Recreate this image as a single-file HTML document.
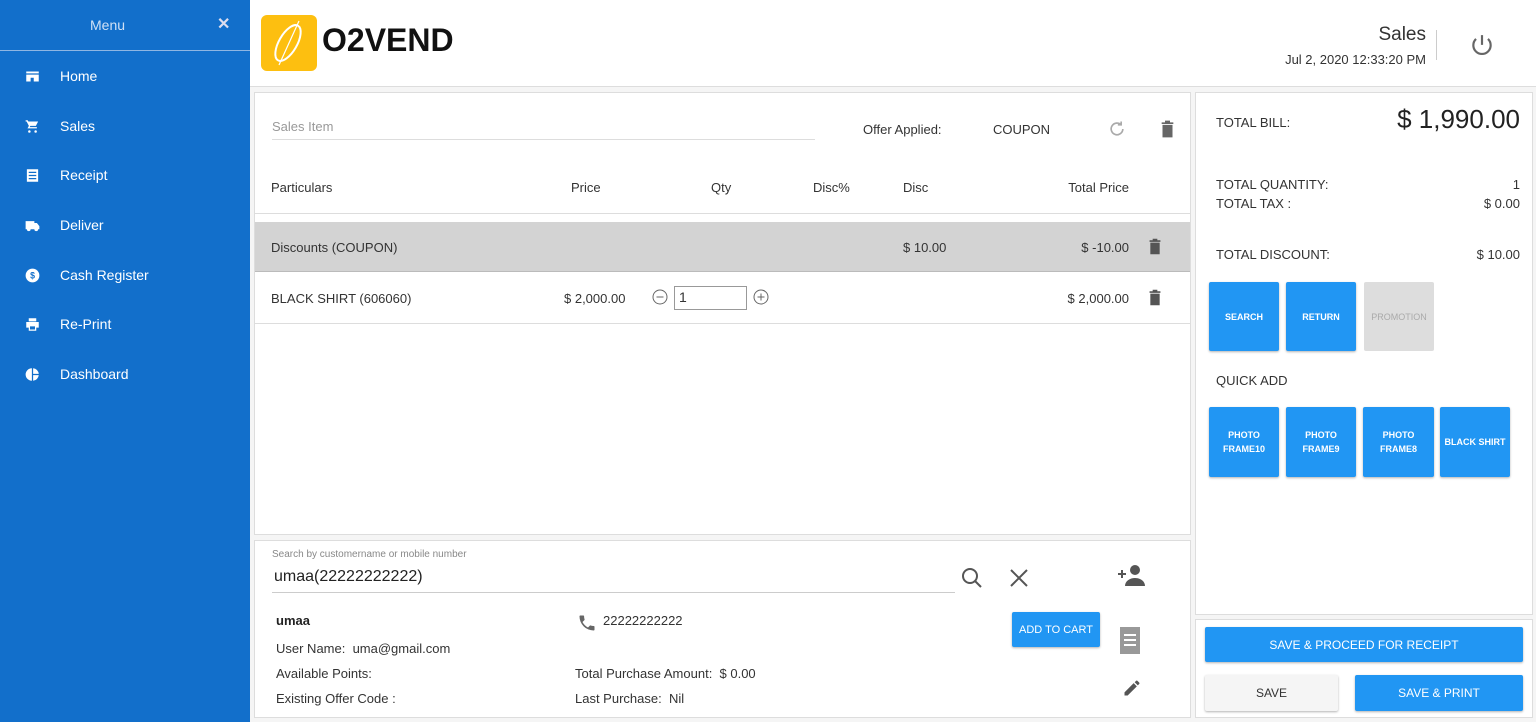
<!DOCTYPE html>
<html><head><meta charset="utf-8"><style>
*{box-sizing:border-box;margin:0;padding:0}
body{width:1536px;height:722px;overflow:hidden;font-family:"Liberation Sans",sans-serif;background:#f5f5f5;position:relative;color:#333}
.a{position:absolute}
#sb{left:0;top:0;width:250px;height:722px;background:#126fcb;color:#fff}
#sb .menu{left:0;top:0;width:250px;height:51px;border-bottom:1px solid #8fb6e3}
#sb .it{left:25px;font-size:14px;display:flex;align-items:center}
#sb .it svg{width:15px;height:15px;margin-right:20px}
#hd{left:250px;top:0;width:1286px;height:87px;background:#fff;border-bottom:1px solid #ddd}
.box{background:#fff;border:1px solid #ddd}
.t{font-size:13px;color:#333;white-space:nowrap}
.btn{background:#2196f3;color:#fff;font-size:9px;font-weight:bold;display:flex;align-items:center;justify-content:center;text-align:center;border-radius:2px;box-shadow:0 1px 2px rgba(0,0,0,.3);line-height:14px}
</style></head><body>
<div id="sb" class="a">
 <div class="a menu"><div class="a" style="left:90px;top:17px;font-size:14px;color:#cfe0f5">Menu</div><div class="a" style="left:217px;top:14px;font-size:16px;font-weight:bold;color:#dde">✕</div></div>
 <div class="a it" style="top:68px"><svg viewBox="0 0 24 24" fill="#fff"><path d="M2 4h20v3H2zM2 9h20v11h-8v-6H9v6H2z"/></svg>Home</div>
 <div class="a it" style="top:118px"><svg viewBox="0 0 24 24" fill="#fff"><path d="M7 18a2 2 0 100 4 2 2 0 000-4zM1 2h3.3l1 2H21l-3.6 7H8.5l-1 2H19v2H4l2.2-4L2.6 4H1zM17 18a2 2 0 100 4 2 2 0 000-4z"/></svg>Sales</div>
 <div class="a it" style="top:167px"><svg viewBox="0 0 24 24" fill="#fff"><path d="M3 2h18v20H3zM6 6v2h12V6zm0 5v2h12v-2zm0 5v2h12v-2z" fill-rule="evenodd"/></svg>Receipt</div>
 <div class="a it" style="top:217px"><svg viewBox="0 0 24 24" fill="#fff"><path d="M1 5h14v3h4l4 5v5h-2a3 3 0 01-6 0H9a3 3 0 01-6 0H1z"/></svg>Deliver</div>
 <div class="a it" style="top:267px"><svg viewBox="0 0 24 24"><circle cx="12" cy="12" r="11" fill="#fff"/><text x="12" y="17" font-size="14" text-anchor="middle" fill="#126fcb" font-weight="bold">$</text></svg>Cash Register</div>
 <div class="a it" style="top:316px"><svg viewBox="0 0 24 24" fill="#fff"><path d="M6 2h12v5H6zM2 8h20v9h-4v5H6v-5H2zm6 7v5h8v-5z" fill-rule="evenodd"/></svg>Re-Print</div>
 <div class="a it" style="top:366px"><svg viewBox="0 0 24 24" fill="#fff"><path d="M11 2v20A10 10 0 0111 2zM13 2a10 10 0 019 9h-9zM13 13h9a10 10 0 01-9 9z"/></svg>Dashboard</div>
</div>
<div id="hd" class="a">
 <div class="a" style="left:11px;top:15px;width:56px;height:56px;background:#fdbf10;border-radius:6px"><svg width="56" height="56" viewBox="0 0 56 56"><ellipse cx="27" cy="28" rx="9" ry="20" transform="rotate(30 27 28)" fill="none" stroke="#fff" stroke-width="2"/><path d="M38 6 L18 50" stroke="#fff" stroke-width="1.2"/></svg></div>
 <div class="a" style="left:72px;top:22px;font-size:32px;font-weight:bold;color:#111">O2VEND</div>
 <div class="a" style="right:110px;top:24px;font-size:19px;color:#333">Sales</div>
 <div class="a" style="right:110px;top:52px;font-size:13px;color:#333">Jul 2, 2020 12:33:20 PM</div>
 <div class="a" style="left:1186px;top:30px;width:1px;height:30px;background:#ccc"></div>
 <svg class="a" style="left:1219px;top:33px" width="26" height="26" viewBox="0 0 24 24" fill="none" stroke="#666" stroke-width="2"><path d="M12 2v9M6.5 5.5a8 8 0 1011 0"/></svg>
</div>
<div class="a box" style="left:254px;top:92px;width:937px;height:443px">
 <div class="a t" style="left:17px;top:26px;color:#999">Sales Item</div>
 <div class="a" style="left:17px;top:46px;width:543px;height:1px;background:#ddd"></div>
 <div class="a t" style="left:608px;top:29px">Offer Applied:</div>
 <div class="a t" style="left:738px;top:29px">COUPON</div>
 <svg class="a" style="left:852px;top:26px" width="20" height="20" viewBox="0 0 24 24" fill="none" stroke="#aaa" stroke-width="2"><path d="M19 12a7 7 0 11-2-5M17 3v4h-4"/></svg>
 <svg class="a" style="left:905px;top:27px" width="15" height="18" viewBox="0 0 18 20" fill="#666"><path d="M2 2h14v2H2zM6 0h6v2H6zM3 5h12v15H3z"/></svg>
 <div class="a t" style="left:16px;top:87px">Particulars</div>
 <div class="a t" style="left:316px;top:87px">Price</div>
 <div class="a t" style="left:456px;top:87px">Qty</div>
 <div class="a t" style="left:558px;top:87px">Disc%</div>
 <div class="a t" style="left:648px;top:87px">Disc</div>
 <div class="a t" style="right:61px;top:87px">Total Price</div>
 <div class="a" style="left:0;top:120px;width:935px;height:1px;background:#ddd"></div>
 <div class="a" style="left:0;top:129px;width:935px;height:50px;background:#d3d3d3;border-bottom:1px solid #bbb"></div>
 <div class="a t" style="left:16px;top:147px">Discounts (COUPON)</div>
 <div class="a t" style="left:648px;top:147px">$ 10.00</div>
 <div class="a t" style="right:61px;top:147px">$ -10.00</div>
 <svg class="a" style="left:893px;top:145px" width="14" height="17" viewBox="0 0 18 20" fill="#555"><path d="M2 2h14v2H2zM6 0h6v2H6zM3 5h12v15H3z"/></svg>
 <div class="a t" style="left:16px;top:198px">BLACK SHIRT (606060)</div>
 <div class="a t" style="left:309px;top:198px">$ 2,000.00</div>
 <svg class="a" style="left:397px;top:196px" width="16" height="16" viewBox="0 0 16 16" fill="none" stroke="#666"><circle cx="8" cy="8" r="7"/><path d="M4.5 8h7"/></svg>
 <div class="a" style="left:419px;top:193px;width:73px;height:24px;border:1px solid #999;font-size:14px;padding:2px 4px">1</div>
 <svg class="a" style="left:498px;top:196px" width="16" height="16" viewBox="0 0 16 16" fill="none" stroke="#666"><circle cx="8" cy="8" r="7"/><path d="M4.5 8h7M8 4.5v7"/></svg>
 <div class="a t" style="right:61px;top:198px">$ 2,000.00</div>
 <svg class="a" style="left:893px;top:196px" width="14" height="17" viewBox="0 0 18 20" fill="#555"><path d="M2 2h14v2H2zM6 0h6v2H6zM3 5h12v15H3z"/></svg>
 <div class="a" style="left:0;top:230px;width:935px;height:1px;background:#ddd"></div>
</div>
<div class="a box" style="left:254px;top:540px;width:937px;height:178px">
 <div class="a" style="left:17px;top:8px;font-size:10px;color:#888">Search by customername or mobile number</div>
 <div class="a" style="left:19px;top:27px;font-size:16px;color:#222">umaa(22222222222)</div>
 <div class="a" style="left:17px;top:51px;width:683px;height:1px;background:#ccc"></div>
 <svg class="a" style="left:705px;top:25px" width="24" height="24" viewBox="0 0 24 24" fill="none" stroke="#555" stroke-width="2"><circle cx="10" cy="10" r="7"/><path d="M15 15l6 6"/></svg>
 <svg class="a" style="left:753px;top:26px" width="22" height="22" viewBox="0 0 22 22" stroke="#555" stroke-width="2"><path d="M3 3l16 16M19 3L3 19"/></svg>
 <svg class="a" style="left:861px;top:22px" width="30" height="24" viewBox="0 0 30 24" fill="#555"><circle cx="19" cy="7" r="5"/><path d="M9 23c0-5 5-8 10-8s10 3 10 8z"/><path d="M2 11h8M6 7v8" stroke="#555" stroke-width="2"/></svg>
 <div class="a" style="left:21px;top:72px;font-size:13px;font-weight:bold;color:#222">umaa</div>
 <svg class="a" style="left:322px;top:71px" width="20" height="22" viewBox="0 0 24 24" fill="#666"><path d="M6.6 10.8a15 15 0 006.6 6.6l2.2-2.2c.3-.3.7-.4 1-.2 1.1.4 2.3.6 3.6.6.6 0 1 .4 1 1V20c0 .6-.4 1-1 1A17 17 0 013 4c0-.6.4-1 1-1h3.5c.6 0 1 .4 1 1 0 1.3.2 2.5.6 3.6.1.3 0 .7-.2 1z"/></svg>
 <div class="a t" style="left:348px;top:72px">22222222222</div>
 <div class="a t" style="left:21px;top:100px">User Name:&nbsp; uma@gmail.com</div>
 <div class="a t" style="left:21px;top:125px">Available Points:</div>
 <div class="a t" style="left:320px;top:125px">Total Purchase Amount:&nbsp; $ 0.00</div>
 <div class="a t" style="left:21px;top:150px">Existing Offer Code :</div>
 <div class="a t" style="left:320px;top:150px">Last Purchase:&nbsp; Nil</div>
 <div class="a btn" style="left:757px;top:71px;width:88px;height:35px;font-size:11px;font-weight:normal">ADD TO CART</div>
 <svg class="a" style="left:863px;top:86px" width="24" height="27" viewBox="0 0 24 27" fill="#999"><path d="M2 0h20v27H2zM6 7v2h12V7zm0 5v2h12v-2zm0 5v2h12v-2z" fill-rule="evenodd"/></svg>
 <svg class="a" style="left:867px;top:137px" width="20" height="20" viewBox="0 0 24 24" fill="#555"><path d="M3 17.2V21h3.8L17.8 10l-3.8-3.8zM20.7 7a1 1 0 000-1.4l-2.3-2.3a1 1 0 00-1.4 0l-1.8 1.8 3.8 3.8z"/></svg>
</div>
<div class="a box" style="left:1195px;top:92px;width:338px;height:523px">
 <div class="a t" style="left:20px;top:22px">TOTAL BILL:</div>
 <div class="a" style="right:12px;top:11px;font-size:26px;color:#222">$ 1,990.00</div>
 <div class="a t" style="left:20px;top:84px">TOTAL QUANTITY:</div>
 <div class="a t" style="right:12px;top:84px">1</div>
 <div class="a t" style="left:20px;top:103px">TOTAL TAX :</div>
 <div class="a t" style="right:12px;top:103px">$ 0.00</div>
 <div class="a t" style="left:20px;top:154px">TOTAL DISCOUNT:</div>
 <div class="a t" style="right:12px;top:154px">$ 10.00</div>
 <div class="a btn" style="left:13px;top:189px;width:70px;height:69px">SEARCH</div>
 <div class="a btn" style="left:90px;top:189px;width:70px;height:69px">RETURN</div>
 <div class="a btn" style="left:168px;top:189px;width:70px;height:69px;background:#ddd;color:#aaa;font-weight:normal;box-shadow:none">PROMOTION</div>
 <div class="a t" style="left:20px;top:280px">QUICK ADD</div>
 <div class="a btn" style="left:13px;top:314px;width:70px;height:70px">PHOTO<br>FRAME10</div>
 <div class="a btn" style="left:90px;top:314px;width:70px;height:70px">PHOTO<br>FRAME9</div>
 <div class="a btn" style="left:167px;top:314px;width:71px;height:70px">PHOTO<br>FRAME8</div>
 <div class="a btn" style="left:244px;top:314px;width:70px;height:70px">BLACK SHIRT</div>
</div>
<div class="a box" style="left:1195px;top:619px;width:338px;height:99px">
 <div class="a btn" style="left:9px;top:7px;width:318px;height:35px;font-size:12px;font-weight:normal">SAVE &amp; PROCEED FOR RECEIPT</div>
 <div class="a btn" style="left:9px;top:55px;width:133px;height:36px;font-size:12px;font-weight:normal;background:#f5f5f5;color:#333">SAVE</div>
 <div class="a btn" style="left:159px;top:55px;width:168px;height:36px;font-size:12px;font-weight:normal">SAVE &amp; PRINT</div>
</div>
</body></html>
